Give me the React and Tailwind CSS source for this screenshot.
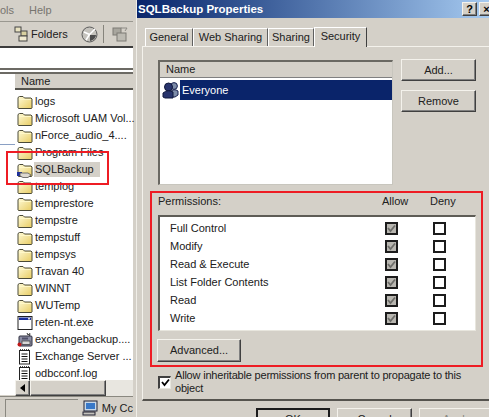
const Folder = ({ shared }) => (
  <svg width="16" height="16" viewBox="0 0 16 16" className="shrink-0">
    <defs>
      <linearGradient id="fg" x1="0" y1="0" x2="1" y2="1">
        <stop offset="0" stopColor="#fffbd8" />
        <stop offset="1" stopColor="#e8cc62" />
      </linearGradient>
    </defs>
    <path d="M1 5 V3.5 L2.5 2.5 H6 L7.5 4 H14 L15 5 V14 L14.5 14.5 H1.5 L1 14 Z" fill="url(#fg)" stroke="#4a4a38" strokeWidth="1" />
    <path d="M2 5.5 H14" stroke="#fff8c8" strokeWidth="1" />
    {shared && (
      <g>
        <rect x="0" y="10" width="5" height="4" fill="#1c2f9c" />
        <path d="M3 11 H11 L14 13 L11 15.5 H6 L3 14 Z" fill="#ddd8d0" stroke="#555" strokeWidth="0.8" />
      </g>
    )}
  </svg>
);

const Exe = () => (
  <svg width="16" height="16" viewBox="0 0 16 16" className="shrink-0">
    <rect x="1" y="1.5" width="14" height="13" fill="#fff" stroke="#222" />
    <rect x="2" y="2.5" width="12" height="2.5" fill="#1c2f9c" />
    <rect x="11" y="3" width="2" height="1.5" fill="#ddd" />
  </svg>
);

const Backup = () => (
  <svg width="16" height="16" viewBox="0 0 16 16" className="shrink-0">
    <path d="M10 1 L11 3 L13 1.5 L12.5 4" stroke="#333" fill="none" />
    <rect x="2" y="4" width="13" height="10" rx="1" fill="#8c8ea4" stroke="#2c2c3c" />
    <rect x="5" y="9" width="8" height="3.5" fill="#d8d8d8" stroke="#333" strokeWidth="0.7" />
    <circle cx="2.5" cy="12.5" r="2" fill="#c01818" />
    <rect x="5" y="5.5" width="6" height="2" fill="#50506a" />
  </svg>
);

const Doc = () => (
  <svg width="16" height="16" viewBox="0 0 16 16" className="shrink-0">
    <rect x="2.5" y="1.5" width="10" height="13.5" fill="#fff" stroke="#222" />
    <path d="M3 .7 H12" stroke="#222" strokeDasharray="1 1" />
    <path d="M4.5 5 H10.5 M4.5 7.5 H10.5 M4.5 10 H10.5 M4.5 12.5 H10.5" stroke="#111" strokeWidth="1" />
  </svg>
);

const People = () => (
  <svg width="18" height="18" viewBox="0 0 18 18" className="shrink-0">
    <circle cx="12" cy="5" r="3.4" fill="#7d8ca8" stroke="#1b2350" />
    <path d="M8 16 V11 Q12 7 16 10 V14 L13 16 Z" fill="#7d8ca8" stroke="#1b2350" />
    <circle cx="6.5" cy="6" r="4" fill="#28346c" stroke="#10183c" />
    <path d="M1 16 V12 Q6 8 11 11 V17 H3 Z" fill="#28346c" stroke="#10183c" />
  </svg>
);

const files = [
  ["logs", "f"],
  ["Microsoft UAM Vol...", "f"],
  ["nForce_audio_4....", "f"],
  ["Program Files", "f"],
  ["SQLBackup", "s"],
  ["templog", "f"],
  ["temprestore", "f"],
  ["tempstre", "f"],
  ["tempstuff", "f"],
  ["tempsys", "f"],
  ["Travan 40", "f"],
  ["WINNT", "f"],
  ["WUTemp", "f"],
  ["reten-nt.exe", "e"],
  ["exchangebackup....", "b"],
  ["Exchange Server ...", "d"],
  ["odbcconf.log", "d"],
];

const FileIcon = ({ t }) =>
  t === "f" ? <Folder /> : t === "s" ? <Folder shared /> : t === "e" ? <Exe /> : t === "b" ? <Backup /> : <Doc />;

const raised =
  "border border-t-[#f4f2ec] border-l-[#f4f2ec] border-r-[#404040] border-b-[#404040] bg-[#d4d0c8] flex items-center justify-center shadow-[inset_-1px_-1px_0_#808080]";

const Btn = ({ className, disabled, children }) => (
  <div className={`${raised} ${className} ${disabled ? "text-[#8a8880]" : ""}`}>{children}</div>
);

const Check = ({ on }) =>
  on ? (
    <div className="w-[13px] h-[13px] border-2 border-[#1c1c1c] bg-[#b8b6b0] flex items-center justify-center">
      <svg width="9" height="9" viewBox="0 0 9 9"><path d="M1 4 L3.5 7 L8 1.5" stroke="#6e6e6a" strokeWidth="1.8" fill="none" /></svg>
    </div>
  ) : (
    <div className="w-[13px] h-[13px] border-2 border-[#1c1c1c] bg-white" />
  );

const Tab = ({ className, children }) => (
  <div className={`h-[18px] flex items-center justify-center border-t border-l border-r border-t-white border-l-white border-r-[#606060] ${className}`}>
    {children}
  </div>
);

const perms = ["Full Control", "Modify", "Read & Execute", "List Folder Contents", "Read", "Write"];

export default function App() {
  return (
    <div
      className="relative w-[489px] h-[417px] overflow-hidden bg-[#d4d0c8] flex text-[11px] leading-[13px] text-[#202020]"
      style={{ fontFamily: '"Liberation Sans", Arial, sans-serif' }}
    >
      {/* Explorer window behind */}
      <div className="w-[133px] h-full shrink-0 flex flex-col">
        <div className="h-[22px] shrink-0 flex items-center text-[#77756f] border-b border-[#9a9890]">
          <span className="w-[13px] text-right">ols</span>
          <span className="ml-[16px]">Help</span>
        </div>
        <div className="h-[26px] shrink-0 flex items-center border-b-2 border-[#3c3c3c]">
          <svg width="16" height="16" viewBox="0 0 16 16" className="ml-[14px]">
            <rect x="1" y="1" width="6" height="5" fill="#e8e2c0" stroke="#444" />
            <rect x="7" y="5" width="6" height="5" fill="#d8d0a0" stroke="#444" />
            <rect x="5" y="10" width="8" height="5" fill="#f0ead0" stroke="#444" />
          </svg>
          <span className="ml-[1px]">Folders</span>
          <svg width="17" height="17" viewBox="0 0 17 17" className="ml-[13px]">
            <circle cx="8.5" cy="8.5" r="7.5" fill="#c4c2bc" stroke="#5c5c5c" />
            <path d="M8.5 8.5 L14 3 M8.5 8.5 L3 6 M8.5 8.5 L5 14" stroke="#fff" strokeWidth="1.5" />
            <path d="M9 15 A6.5 6.5 0 0 0 15 9 L9 9 Z" fill="#4c4c4c" />
          </svg>
          <div className="ml-[5px] w-[1px] h-[18px] bg-[#86847c]" />
          <svg width="16" height="16" viewBox="0 0 16 16" className="ml-[8px]">
            <rect x="1" y="2" width="8" height="7" fill="#a8a69e" stroke="#7c7a74" />
            <rect x="5" y="7" width="9" height="8" fill="#bcbab2" stroke="#7c7a74" />
            <path d="M9 2 H15 L13 5" stroke="#8c8a84" fill="none" />
          </svg>
        </div>
        <div className="h-[20px] shrink-0 bg-white" />
        <div className="h-[6px] shrink-0 bg-white border-y-2 border-[#6c6a64]" />
        <div className="flex-1 min-h-0 flex">
          <div className="w-[15px] shrink-0 bg-white pt-[70px]">
            <div className="h-[1px] bg-[#8aa0c4]" />
          </div>
          <div className="flex-1 min-w-0 flex flex-col bg-white">
            <div className="h-[16px] shrink-0 bg-[#d4d0c8] border-b-2 border-[#56544e] flex items-center pl-[6px]">Name</div>
            <div className="h-[290px] shrink-0 pt-[3px]">
              {files.map(([n, t]) => (
                <div key={n} className="h-[17px] flex items-center pl-[2px] gap-[1px] whitespace-nowrap">
                  <FileIcon t={t} />
                  <span className={`leading-[15px] px-[1px] ${t === "s" ? "bg-[#d4d0c8] pr-[6px]" : ""}`}>{n}</span>
                </div>
              ))}
            </div>
            <div className="h-[16px] shrink-0 flex">
              <Btn className="w-[15px] h-[16px]">
                <svg width="5" height="8" viewBox="0 0 5 8"><path d="M5 0 V8 L0 4 Z" fill="#000" /></svg>
              </Btn>
              <Btn className="w-[76px] h-[16px]" />
              <div className="flex-1 bg-[#e8e6e0]" />
            </div>
          </div>
        </div>
        <div className="h-[21px] shrink-0 mt-[1px] border-t border-[#8a8880] flex items-stretch pt-[2px]">
          <div className="ml-[5px] w-[76px] border-l border-t border-[#8a8880]" />
          <div className="ml-[4px] flex items-center gap-[4px] whitespace-nowrap">
            <svg width="16" height="16" viewBox="0 0 16 16" className="shrink-0">
              <rect x="2" y="1" width="13" height="10" fill="#c8d8e8" stroke="#223" />
              <rect x="4" y="3" width="9" height="6" fill="#3878c8" />
              <rect x="1" y="12" width="12" height="3" fill="#c4c2bc" stroke="#223" />
            </svg>
            <span>My Cc</span>
          </div>
        </div>
      </div>

      {/* Dialog */}
      <div className="ml-[3px] flex-1 min-w-0 flex flex-col border-l border-[#f0eee8]">
        <div className="h-[18px] shrink-0 bg-gradient-to-r from-[#0a246a] to-[#a6caf0] flex items-center pl-[1px] pr-[1px]">
          <span className="text-white font-bold text-[11.5px] whitespace-nowrap">SQLBackup Properties</span>
          <div className="ml-auto flex gap-[2px] mr-[-6px]">
            <Btn className="w-[15px] h-[14px] font-bold text-black">?</Btn>
            <Btn className="w-[15px] h-[14px] font-bold text-black">×</Btn>
          </div>
        </div>

        <div className="h-[20px] shrink-0 mt-[8px] pl-[8px] flex items-end">
          <Tab className="w-[48px]">General</Tab>
          <Tab className="w-[75px]">Web Sharing</Tab>
          <Tab className="w-[46px]">Sharing</Tab>
          <div className="h-[20px] w-[53px] mb-[-1px] relative z-10 flex items-start pt-[2px] justify-center border-t border-l border-r border-t-white border-l-white border-r-[#404040] bg-[#d4d0c8]">Security</div>
        </div>

        <div className="h-[355px] shrink-0 ml-[5px] mr-[-8px] border-t border-l border-[#f4f2ec] border-b-2 border-b-[#55534e] pl-[15px] pr-[20px] pt-[13px]">
          <div className="flex items-start">
            <div className="w-[235px] h-[125px] shrink-0 border-t-2 border-l-2 border-r border-b border-[#6a6862] border-r-[#c8c6be] border-b-[#c8c6be] bg-white">
              <div className="h-[16px] bg-[#d4d0c8] border-b border-[#808080] flex items-center pl-[6px]">Name</div>
              <div className="mt-[2px] h-[20px] flex items-center pl-[2px]">
                <People />
                <div className="flex-1 h-full bg-[#0a246a] text-white flex items-center pl-[2px]">Everyone</div>
              </div>
            </div>
            <div className="ml-[8px] mt-[-1px] w-[75px] shrink-0 flex flex-col gap-[9px]">
              <Btn className="h-[22px]">Add...</Btn>
              <Btn className="h-[22px]">Remove</Btn>
            </div>
          </div>

          <div className="mt-[9px] w-[318px]">
            <div className="h-[14px] flex items-center">
              <span className="flex-1">Permissions:</span>
              <span className="w-[25px] text-center">Allow</span>
              <span className="w-[24px] ml-[23px] mr-[22px] text-center">Deny</span>
            </div>
            <div className="mt-[7px] h-[116px] border border-t-2 border-l-2 border-[#5e5c56] border-r-[#e8e6de] border-b-[#e8e6de] bg-white pt-[2px]">
              {perms.map((p) => (
                <div key={p} className="h-[18px] flex items-center pl-[10px]">
                  <span className="flex-1">{p}</span>
                  <Check on />
                  <div className="ml-[35px] mr-[29px]"><Check /></div>
                </div>
              ))}
            </div>
            <Btn className="mt-[8px] ml-[-1px] w-[84px] h-[23px]">Advanced...</Btn>
            <div className="mt-[7px] flex items-center">
              <div className="w-[13px] h-[13px] shrink-0 border border-t-2 border-l-2 border-[#404040] border-r-[#e8e6de] border-b-[#e8e6de] bg-white flex items-center justify-center">
                <svg width="9" height="9" viewBox="0 0 9 9"><path d="M1 4 L3.5 7 L8 1.5" stroke="#000" strokeWidth="1.8" fill="none" /></svg>
              </div>
              <div className="ml-[4px] w-[298px] tracking-[-0.2px]">Allow inheritable permissions from parent to propagate to this object</div>
            </div>
          </div>
        </div>

        <div className="mt-[7px] flex pl-[119px] gap-[7px] shrink-0">
          <div className="w-[74px] h-[23px] shrink-0 border-2 border-[#1c1c1c] flex items-center justify-center">OK</div>
          <Btn className="w-[75px] h-[23px] shrink-0">Cancel</Btn>
          <Btn className="w-[75px] h-[23px] shrink-0" disabled>Apply</Btn>
        </div>
      </div>

      {/* Red annotations over the screenshot */}
      <div className="absolute left-[6px] top-[151px] w-[103px] h-[34px] border-2 border-[#ee1c24] pointer-events-none" />
      <div className="absolute left-[150px] top-[191px] w-[333px] h-[176px] border-2 border-[#ee1c24] pointer-events-none" />
    </div>
  );
}
